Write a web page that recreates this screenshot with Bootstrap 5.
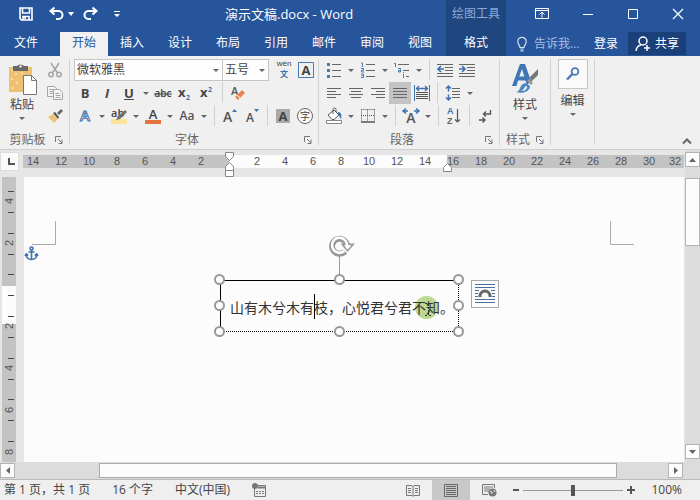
<!DOCTYPE html>
<html lang="zh-CN">
<head>
<meta charset="utf-8">
<meta name="viewport" content="width=device-width, initial-scale=1">
<title>演示文稿.docx - Word</title>
<link href="https://cdn.jsdelivr.net/npm/bootstrap@5.3.0/dist/css/bootstrap.min.css" rel="stylesheet">
<style>
:root{--blue:#27559b;--deep:#204680;--ink:#444;--accent:#4a7ab0}
body{font:12px/16px "Open Sans","Noto Sans CJK SC",sans-serif;color:var(--ink);background:#e6e6e6}
button{border:0;background:none;padding:0;color:inherit;font:inherit}
svg{display:block;flex:none;overflow:visible}
a{color:inherit;text-decoration:none}
.i16{width:16px;height:16px}
/* title bar and tabs */
.topbar{background:var(--blue);color:#fff;height:56px}
.title-row{height:32px;padding-bottom:4px}
.doc-title{font-size:13px}
.quick{width:225px;padding-left:18px}
.tab-row{height:24px}
.tab-row a{width:48px;height:24px;line-height:22px;text-align:center}
.tab-row a.file-tab{width:52px;margin-right:8px}
.tab-row a.current{background:#f1f1f1;color:var(--blue)}
.context-tab{width:60px;background:var(--deep)}
.context-name{color:#8ba8d6}
.window-side{width:194px}
.tell{width:60px;background:none;border:0;color:#b4c6e4;padding:0;font:inherit}
.tell::placeholder{color:#a9bee0;opacity:1}
.sign-in{margin-right:10px}
.share{background:#1b3f78;width:58px;height:23px}
/* ribbon */
.ribbon{background:#f0f0f0;height:94px;border-bottom:1px solid #cfcfcf}
.group{background:linear-gradient(#d2d2d2,#d2d2d2) right top/1px 86px no-repeat;padding-right:1px;margin-top:3px}
.g-clip{width:70px}.g-font{width:249px}.g-para{width:181px}.g-style{width:51px}.g-edit{width:44px}
.tools{height:23px}
.tool{width:22px;height:22px;display:flex;align-items:center;justify-content:center}
.tool.on{background:#c3c3c3}
.arrow{width:12px;height:22px;display:flex;align-items:center;justify-content:center}
.arrow::after,.drop::after{content:"";border:3px solid transparent;border-top-color:#666;border-bottom:0}
.rule{width:9px;height:21px;background:linear-gradient(#d0d0d0,#d0d0d0) center/1px 100% no-repeat}
.group-label{height:18px;color:#666}
.launch{width:14px}
.pick{appearance:none;border:1px solid #c6c6c6;background:#fdfdfd url("data:image/svg+xml,%3Csvg xmlns='http://www.w3.org/2000/svg' width='6' height='3'%3E%3Cpath d='M0 0h6L3 3z' fill='%23666'/%3E%3C/svg%3E") right 3px center no-repeat;height:22px;padding:0 2px;color:#444;font:inherit;border-radius:0}
.pick-name{width:149px}.pick-size{width:47px;margin-left:-1px}
.glyph{font-size:13px;font-weight:700;line-height:20px;color:#444}
.tiny-latin{font:8px "Liberation Sans",sans-serif}
.tiny-han{font:700 8px "Noto Sans CJK SC",sans-serif}
.sort-letter{font:700 9px "Liberation Sans",sans-serif}
.find-box{width:30px;height:30px;border:1px solid #c6c6c6;background:#fafafa}
/* rulers */
.ruler-row{height:27px}
.corner{width:19px;height:19px;background:#fafafa;border:1px solid #ddd;margin-top:2px}
.h-ruler{height:13px;margin:5px 1px 0 4px;font:11px/13px "Liberation Sans",sans-serif;color:#555;background:linear-gradient(90deg,#c3c3c3 206px,#fcfcfc 206px 424px,#c3c3c3 424px)}
.h-ruler span{width:28px;flex:none;text-align:center}
.h-ruler span:first-child{width:24px;padding-right:4px}
.h-ruler span:last-child{width:24px}
.ruler-pin{position:absolute}
.pin-left{left:225px;top:2px}
.pin-right{left:443px;top:13px}
.v-ruler{width:14px;margin:0 8px 0 2px;padding-top:14px;font:11px/14px "Liberation Sans",sans-serif;color:#555;background:linear-gradient(#c3c3c3 109px,#fcfcfc 109px 147px,#c3c3c3 147px)}
.v-ruler div{flex:1 1 0;display:flex;align-items:center;justify-content:center;background:linear-gradient(#444,#444) 6px 0/6px 1px no-repeat}
.v-ruler span{transform:rotate(-90deg)}
.paper{background:#fcfcfc;margin-right:1px}
/* objects floating on the page canvas */
.float-item{position:absolute}
.crop-left{left:8px;top:44px}
.crop-right{left:586px;top:44px}
.anchor{left:1px;top:69px}
.handles{left:190px;top:56px}
.text-frame{left:196px;top:103px;width:239px;height:52px;border:1px dotted #000;border-top-style:solid;border-left-style:solid;padding:16px 0 0 9px}
.verse{font:14px/20px "Noto Sans CJK SC",sans-serif;color:#333;white-space:nowrap}
.spot{left:391px;top:119px;width:23px;height:23px;border-radius:50%;background:#bcd992}
.wrap-btn{left:447px;top:103px;width:28px;height:28px;border:1px solid #a8a8a8;background:#fcfcfc}
/* scrollbars */
.v-bar{width:15px;padding:2px 0 3px;background:#dcdcdc}
.bar-end{background:#fcfcfc;border:1px solid #b4b4b4;width:15px;height:15px;display:flex;align-items:center;justify-content:center}
.v-thumb{height:68px;margin-top:11px;background:#fcfcfc;border:1px solid #b4b4b4}
.h-bar{height:17px;padding:1px 17px 1px 0;background:#dcdcdc}
.h-thumb{margin:0 51px 0 84px;height:15px;background:#fcfcfc;border:1px solid #aaa}
/* status bar */
.status{height:21px;background:#efefef;border-top:1px solid #b9b9b9;padding-left:4px;white-space:nowrap}
.facts{gap:22px}
.view{width:38px;height:20px;display:flex;align-items:center;justify-content:center}
.view.on{background:#c8c8c8}
.zoom{appearance:none;width:100px;height:12px;background:linear-gradient(#999,#999) center/100% 1px no-repeat}
.zoom::-webkit-slider-thumb{appearance:none;width:4px;height:11px;background:#555}
.sign{width:15px;height:20px;display:flex;align-items:center;justify-content:center}
.percent{margin:0 18px 0 13px}
</style>
<script src="https://cdn.jsdelivr.net/npm/bootstrap@5.3.0/dist/js/bootstrap.bundle.min.js"></script>
</head>
<body class="d-flex flex-column vh-100 overflow-hidden">

<header class="topbar d-flex flex-shrink-0">
  <div class="flex-grow-1">
    <div class="title-row d-flex align-items-center">
      <div class="quick d-flex align-items-center">
        <button aria-label="保存"><svg class="i16" viewBox="0 0 16 16" fill="none" stroke="#fff" stroke-width="1.6"><path d="M2 2h12v12H3.500L2 12.500z"/><path d="M4.500 2v5h7V2M5 14v-3.500h6V14M7 11v2"/></svg></button>
        <button class="ms-3" aria-label="撤消"><svg width="14" height="16" viewBox="1 0 14 16" fill="none" stroke="#fff" stroke-width="2"><path d="M5.500 1.500 1.500 5l4 3.500M2 5h7.500a4 4 0 0 1 0 8H7"/></svg></button>
        <span class="ms-1"><svg width="6" height="4"><path d="M0 0h6L3 4z" fill="#fff"/></svg></span>
        <button class="ms-2" aria-label="恢复"><svg width="16" height="16" viewBox="0 0 16 16" fill="none" stroke="#fff" stroke-width="2"><path d="M10.500 1.500 14.500 5l-4 3.500M14 5H6.500a4 4 0 0 0 0 8H9"/></svg></button>
        <button class="ms-3" aria-label="自定义快速访问工具栏"><svg width="7" height="7"><path d="M0 0h6v1H0zM0 3h6L3 6z" fill="#fff"/></svg></button>
      </div>
      <span class="doc-title">演示文稿.docx - Word</span>
    </div>
    <nav class="tab-row d-flex">
      <a class="file-tab" href="#">文件</a><a class="current" href="#">开始</a><a href="#">插入</a><a href="#">设计</a><a href="#">布局</a><a href="#">引用</a><a href="#">邮件</a><a href="#">审阅</a><a href="#">视图</a>
    </nav>
  </div>
  <div class="context-tab d-flex flex-column align-items-center">
    <div class="title-row d-flex align-items-center context-name">绘图工具</div>
    <nav class="tab-row"><a class="d-block" href="#">格式</a></nav>
  </div>
  <div class="window-side">
    <div class="title-row d-flex align-items-center justify-content-around ps-2 ms-1">
      <button aria-label="功能区显示选项"><svg width="14" height="12" fill="none" stroke="#fff"><path d="M.5.5h13v10H.5zM.5 2.500h13M7 9.500v-5M4.500 6.500 7 4l2.500 2.500"/></svg></button>
      <button aria-label="最小化"><svg width="12" height="12"><path d="M1 6h10v1H1z" fill="#fff"/></svg></button>
      <button aria-label="最大化"><svg width="12" height="12"><path d="M1.500 1.500h9v9h-9z" fill="none" stroke="#fff"/></svg></button>
      <button aria-label="关闭"><svg width="12" height="12"><path d="m1 1 10 10M11 1 1 11" fill="none" stroke="#fff" stroke-width="1.200"/></svg></button>
    </div>
    <div class="tab-row d-flex align-items-start">
      <svg class="ms-2 me-1 mt-1" width="16" height="16" viewBox="0 0 16 16" fill="none" stroke="#d5e0f2" stroke-width="1.200"><path d="M6 11.500C6 9.500 3.800 8.500 3.800 5.500a4.200 4.200 0 0 1 8.400 0c0 3-2.200 4-2.200 6zM6.200 13h3.600M6.500 14.800h3"/></svg>
      <input class="tell lh-lg" aria-label="告诉我" placeholder="告诉我...">
      <button class="lh-lg sign-in">登录</button>
      <button class="share d-flex align-items-center justify-content-center">
        <svg class="me-1" width="16" height="16" viewBox="0 0 16 16" fill="none" stroke="#fff" stroke-width="1.500"><circle cx="8" cy="5" r="4"/><path d="M1 15c.5-4 2.500-5.500 5-6M12 9v6M9 12h6"/></svg>共享</button>
    </div>
  </div>
</header>

<section class="ribbon d-flex flex-shrink-0" aria-label="开始">
  <div class="group g-clip d-flex flex-column justify-content-between">
    <div class="d-flex">
      <button class="drop d-flex flex-column align-items-center ms-1 pt-1">
        <svg width="36" height="34" viewBox="1 0 36 34"><path d="M6 4h23v25H6z" fill="#edc171"/><path d="M8 6h2v2H8zm4 4h2v2h-2zm-4 5h2v2H8zm5 4h2v2h-2zm-4 5h2v2H9zm9-15h2v2h-2z" fill="#f7dda6"/><path d="M10 3h4a4 3 0 0 1 7 0h4v5H10z" fill="#686868"/><circle cx="17.500" cy="3.500" r="1.200" fill="#f0f0f0"/><path d="M20.500 12.500h8l5 5v14h-13z" fill="#fff" stroke="#777"/><path d="M28.500 12.500v5h5" fill="none" stroke="#777"/></svg>
        <span class="mb-1">粘贴</span>
      </button>
      <div class="ms-1">
        <div class="tools"><button class="tool" aria-label="剪切"><svg width="16" height="16" viewBox="0 0 16 16" fill="none" stroke="#a5a5a5" stroke-width="1.500"><path d="m4 1 6.500 10M12 1 5.500 11"/><circle cx="4" cy="12.500" r="2.200"/><circle cx="12" cy="12.500" r="2.200"/></svg></button></div>
        <div class="tools"><button class="tool" aria-label="复制"><svg width="16" height="16" viewBox="0 0 16 16" fill="#f4f4f4" stroke="#a5a5a5"><path d="M.5 1.500h7l2 2v8h-9zM2.500 4.500h4M2.500 6.500h4M2.500 8.500h4"/><path d="M6.500 4.500h6l3 3v7h-9zM8.500 8.500h4M8.500 10.500h5M8.500 12.500h5"/></svg></button></div>
        <div class="tools"><button class="tool" aria-label="格式刷"><svg width="16" height="16" viewBox="0 0 16 16"><path d="m1 9 5-3 5 5-4 4z" fill="#efc377"/><path d="m6 5 2-1 4 5-1 2z" fill="#555"/><path d="m10 5 4-4 2 2-4 4z" fill="#666"/></svg></button></div>
      </div>
    </div>
    <div class="group-label d-flex align-items-center"><span class="flex-grow-1 text-center">剪贴板</span><button class="launch" aria-label="剪贴板选项"><svg width="8" height="8" fill="none" stroke="#777"><path d="M.5 6V.5H6M3 3l4 4M7 3.500v4H3.500"/></svg></button></div>
  </div>

  <div class="group g-font d-flex flex-column justify-content-between">
    <div class="ps-1">
      <div class="tools d-flex">
        <select class="pick pick-name" aria-label="字体"><option>微软雅黑</option></select><select class="pick pick-size" aria-label="字号"><option>五号</option></select>
        <button class="tool ms-1" aria-label="拼音指南"><svg width="18" height="20"><text class="tiny-latin" x="9" y="6" text-anchor="middle" fill="#444">wén</text><text class="tiny-han" x="9" y="17" text-anchor="middle" fill="#3e71ad">文</text></svg></button>
        <button class="tool" aria-label="字符边框"><svg width="16" height="16"><path d="M.5.5h15v15H.5z" fill="none" stroke="#4a7ab0"/><text x="8" y="13" text-anchor="middle" font-size="13" font-weight="700" fill="#444">A</text></svg></button>
      </div>
      <div class="tools d-flex">
        <button class="tool glyph">B</button><button class="tool glyph fst-italic">I</button><button class="tool glyph text-decoration-underline">U</button><button class="arrow" aria-label="下划线类型"></button>
        <button class="tool" aria-label="删除线"><svg width="18" height="14"><text x="9" y="11" text-anchor="middle" font-size="10" font-weight="600" fill="#444">abc</text><path d="M0 8h18" stroke="#444"/></svg></button>
        <button class="tool" aria-label="下标"><svg width="16" height="16"><text x="1" y="12" font-size="13" font-weight="700" fill="#444">x</text><text x="9" y="15" font-size="7" font-weight="700" fill="#3e71ad">2</text></svg></button>
        <button class="tool" aria-label="上标"><svg width="16" height="16"><text x="1" y="12" font-size="13" font-weight="700" fill="#444">x</text><text x="9" y="7" font-size="7" font-weight="700" fill="#3e71ad">2</text></svg></button>
        <span class="rule"></span>
        <button class="tool" aria-label="清除所有格式"><svg width="16" height="16"><text x="1" y="10" font-size="11" font-weight="600" fill="#555">A</text><path d="m5 12 7-7 3 3-7 7z" fill="#e98550"/><path d="m7 10 3 3" stroke="#fff"/></svg></button>
      </div>
      <div class="tools d-flex">
        <button class="tool" aria-label="文本效果"><svg width="18" height="18"><text x="9" y="14" text-anchor="middle" font-size="15" font-weight="600" fill="#fff" stroke="#3e71ad">A</text></svg></button><button class="arrow" aria-label="更多文本效果"></button>
        <button class="tool" aria-label="突出显示"><svg width="18" height="18"><path d="M1 12h16v5H1z" fill="#fbe39b"/><text x="1" y="10" font-size="11" font-weight="600" fill="#444">ab</text><path d="m6 13 2-4 7-6 2 2-7 7z" fill="#707070"/></svg></button><button class="arrow" aria-label="突出显示颜色"></button>
        <button class="tool" aria-label="字体颜色"><svg width="18" height="18"><text x="9" y="12" text-anchor="middle" font-size="13" font-weight="600" fill="#444">A</text><path d="M1 13h16v4H1z" fill="#e0743a"/></svg></button><button class="arrow" aria-label="更多字体颜色"></button>
        <button class="tool" aria-label="更改大小写"><svg width="18" height="16"><text x="9" y="12" text-anchor="middle" font-size="12" font-weight="600" fill="#555">Aa</text></svg></button><button class="arrow" aria-label="大小写选项"></button>
        <span class="rule"></span>
        <button class="tool" aria-label="增大字号"><svg width="16" height="16"><text x="1" y="14" font-size="14" font-weight="600" fill="#555">A</text><path d="M10 4h5l-2.500-3z" fill="#3e71ad"/></svg></button>
        <button class="tool" aria-label="减小字号"><svg width="16" height="16"><text x="2" y="14" font-size="12" font-weight="600" fill="#555">A</text><path d="M10 1h5l-2.500 3z" fill="#3e71ad"/></svg></button>
        <span class="rule"></span>
        <button class="tool" aria-label="字符底纹"><svg width="14" height="14"><path d="M0 0h14v14H0z" fill="#aaa"/><text x="7" y="12" text-anchor="middle" font-size="13" font-weight="700" fill="#444">A</text></svg></button>
        <button class="tool" aria-label="带圈字符"><svg width="16" height="16"><circle cx="8" cy="8" r="7.500" fill="#fafafa" stroke="#666"/><text x="8" y="12" text-anchor="middle" font-size="10" fill="#444">字</text></svg></button>
      </div>
    </div>
    <div class="group-label d-flex align-items-center"><span class="flex-grow-1 text-center">字体</span><button class="launch" aria-label="字体选项"><svg width="8" height="8" fill="none" stroke="#777"><path d="M.5 6V.5H6M3 3l4 4M7 3.500v4H3.500"/></svg></button></div>
  </div>

  <div class="group g-para d-flex flex-column justify-content-between">
    <div class="ps-1">
      <div class="tools d-flex">
        <button class="tool" aria-label="项目符号"><svg class="i16"><path d="M1 1h3v3H1zM1 7h3v3H1zM1 13h3v3H1z" fill="#4a7ab0"/><path d="M6 2.500h9M6 8.500h9M6 14.500h9" stroke="#666"/></svg></button><button class="arrow" aria-label="项目符号库"></button>
        <button class="tool" aria-label="编号"><svg class="i16" fill="none"><path d="M1 1h1.500v4M1 6.500h2.500v1.800H1.500V10H4M1 12h2.500v3.500H1M1.500 13.700h2" stroke="#4a7ab0"/><path d="M6 2.500h9M6 8.500h9M6 14.500h9" stroke="#666"/></svg></button><button class="arrow" aria-label="编号库"></button>
        <button class="tool" aria-label="多级列表"><svg class="i16" fill="none"><path d="M0 1.500h1.500V5M4 6.500h2.500V10H4.500V8.500h2M9.500 10v1M9.500 12v4" stroke="#4a7ab0"/><path d="M4 2.500h11M9 8.500h6M12 14.500h3" stroke="#666"/></svg></button><button class="arrow" aria-label="列表库"></button>
        <span class="rule"></span>
        <button class="tool" aria-label="减少缩进量"><svg class="i16" fill="none"><path d="M0 2.500h16M8 5.500h8M8 8.500h8M0 11.500h16M0 14.500h16" stroke="#666"/><path d="M7 7H1M4 4 1 7l3 3" stroke="#3e71ad" stroke-width="1.700"/></svg></button>
        <button class="tool" aria-label="增加缩进量"><svg class="i16" fill="none"><path d="M0 2.500h16M8 5.500h8M8 8.500h8M0 11.500h16M0 14.500h16" stroke="#666"/><path d="M0 7h6M3 4l3 3-3 3" stroke="#3e71ad" stroke-width="1.700"/></svg></button>
      </div>
      <div class="tools d-flex">
        <button class="tool" aria-label="左对齐"><svg width="14" height="12" stroke="#666"><path d="M0 1.500h14M0 4.500h9M0 7.500h14M0 10.500h9"/></svg></button>
        <button class="tool" aria-label="居中"><svg width="14" height="12" stroke="#666"><path d="M0 1.500h14M2 4.500h10M0 7.500h14M2 10.500h10"/></svg></button>
        <button class="tool" aria-label="右对齐"><svg width="14" height="12" stroke="#666"><path d="M0 1.500h14M5 4.500h9M0 7.500h14M5 10.500h9"/></svg></button>
        <button class="tool on" aria-label="两端对齐" aria-pressed="true"><svg width="14" height="12" stroke="#666"><path d="M0 1.500h14M0 4.500h14M0 7.500h14M0 10.500h14"/></svg></button>
        <button class="tool" aria-label="分散对齐"><svg class="i16" fill="none"><path d="M.5 0v16M15.500 0v16" stroke="#3e71ad"/><path d="M3 3.500h10M5 1 2.500 3.500 5 6M11 1l2.500 2.500L11 6" stroke="#3e71ad" stroke-width="1.400"/><path d="M2 7.500h12M2 9.500h12M2 11.500h12M2 13.500h12" stroke="#555"/></svg></button>
        <span class="rule"></span>
        <button class="tool" aria-label="行和段落间距"><svg class="i16" fill="none"><path d="M3.500 1v5.500M1 3.500 3.500 1 6 3.500M3.500 15V9.500M1 12.500 3.500 15 6 12.500" stroke="#3e71ad" stroke-width="1.500"/><path d="M7 3.500h8M7 6.500h8M7 9.500h8M7 12.500h8" stroke="#666"/></svg></button><button class="arrow" aria-label="间距选项"></button>
      </div>
      <div class="tools d-flex">
        <button class="tool" aria-label="底纹"><svg class="i16" fill="none"><path d="M.5 12.500h15v3H.5z" fill="#fff" stroke="#888"/><path d="m2 7 6-5 5 5-5 4.500H6zM7 6V1.500a1.500 1.500 0 0 1 3 0V4" fill="#fff" stroke="#555"/><path d="M12 4c3 0 4 3 3 7-1.500-1-1-4-3-4z" fill="#3e71ad"/></svg></button><button class="arrow" aria-label="底纹颜色"></button>
        <button class="tool" aria-label="边框"><svg width="14" height="14" fill="none" stroke="#555"><path d="M.5.500h13M.5.500v12M13.500.500v12M6.500 .5v12M0 6.500h14" stroke-dasharray="1 1"/><path d="M0 13h14" stroke-width="1.500"/></svg></button><button class="arrow" aria-label="边框类型"></button>
        <span class="rule"></span>
        <button class="tool" aria-label="中文版式"><svg width="18" height="16" fill="none"><text x="9" y="15" text-anchor="middle" font-size="14" font-weight="600" fill="#555">A</text><path d="M1 3h5M4 .5 1 3l3 2.500M12 3h5M14 .5 17 3l-3 2.500" stroke="#3e71ad" stroke-width="1.500"/></svg></button><button class="arrow" aria-label="版式选项"></button>
        <span class="rule"></span>
        <button class="tool" aria-label="排序"><svg width="16" height="18"><text class="sort-letter" x="1" y="7" fill="#3e71ad">A</text><text class="sort-letter" x="1" y="17" fill="#666">Z</text><path d="M11.500 2v13M9 12.500l2.500 2.500 2.500-2.500" fill="none" stroke="#555" stroke-width="1.200"/></svg></button>
        <span class="rule"></span>
        <button class="tool" aria-label="显示编辑标记"><svg class="i16" fill="none" stroke="#555" stroke-width="1.400"><path d="M13.500 2v4H7M9 3.500 6.500 6 9 8.500M2 12h6M5.500 9.500 8 12l-2.500 2.500"/></svg></button>
      </div>
    </div>
    <div class="group-label d-flex align-items-center"><span class="flex-grow-1 text-center">段落</span><button class="launch" aria-label="段落选项"><svg width="8" height="8" fill="none" stroke="#777"><path d="M.5 6V.5H6M3 3l4 4M7 3.500v4H3.500"/></svg></button></div>
  </div>

  <div class="group g-style d-flex flex-column justify-content-between">
    <button class="drop d-flex flex-column align-items-center pt-1">
      <svg width="30" height="34" viewBox="0 0 30 34"><path fill-rule="evenodd" d="M2 23 10 1h5l6 17-4 4-1.500-4.500H8L6.500 23zM9.300 13.500h5L12 6z" fill="#3f76b5"/><path d="m20 14 8-8v6l-7 7z" fill="#777"/><path d="m17 18 2-2 4 4-2 2z" fill="#999"/><path d="M6 29c5 0 3-9 10-9l4 3c0 6-8 8-14 6z" fill="#4f86c4"/><path d="M11 28c4-1 3-5 6-5 0 4-3 5-6 5z" fill="#fff"/></svg>
      <span class="mb-1">样式</span>
    </button>
    <div class="group-label d-flex align-items-center"><span class="flex-grow-1 text-center">样式</span><button class="launch" aria-label="样式选项"><svg width="8" height="8" fill="none" stroke="#777"><path d="M.5 6V.5H6M3 3l4 4M7 3.500v4H3.500"/></svg></button></div>
  </div>

  <div class="group g-edit">
    <button class="drop d-flex flex-column align-items-center w-100">
      <span class="find-box d-flex align-items-center justify-content-center mb-1"><svg width="14" height="14" viewBox="0 0 14 14" fill="none" stroke="#4a7ab0" stroke-width="1.800"><circle cx="9" cy="4.500" r="3.400"/><path d="M6.500 7 1 12.500" stroke-width="2.400"/></svg></span>
      <span class="mb-1">编辑</span>
    </button>
  </div>
  <div class="flex-grow-1 d-flex align-items-end justify-content-end pe-2 pb-1"><button aria-label="折叠功能区"><svg width="10" height="8"><path d="m1 6.500 4-4 4 4" fill="none" stroke="#666" stroke-width="2"/></svg></button></div>
</section>

<main class="d-flex flex-grow-1 overflow-hidden">
  <div class="flex-grow-1 d-flex flex-column overflow-hidden">
    <div class="ruler-row d-flex flex-shrink-0 position-relative">
      <button class="corner" aria-label="制表符类型"><svg width="17" height="17"><path d="M8 5v6h6" fill="none" stroke="#555" stroke-width="2"/></svg></button>
      <div class="h-ruler d-flex flex-grow-1 overflow-hidden">
        <span>14</span><span>12</span><span>10</span><span>8</span><span>6</span><span>4</span><span>2</span><span></span><span>2</span><span>4</span><span>6</span><span>8</span><span>10</span><span>12</span><span>14</span><span>16</span><span>18</span><span>20</span><span>22</span><span>24</span><span>26</span><span>28</span><span>30</span><span>32</span>
      </div>
      <svg class="ruler-pin pin-left" width="9" height="25" fill="#fff" stroke="#888"><path d="M.5.500h8v4l-4 4-4-4zM.5 18.500v-4l4-4 4 4v4zM.5 18.500h8v6h-8z"/></svg>
      <svg class="ruler-pin pin-right" width="9" height="10" fill="#fff" stroke="#888"><path d="M.5 8.500v-4l4-4 4 4v4z"/></svg>
    </div>
    <div class="d-flex flex-grow-1 overflow-hidden">
      <div class="v-ruler d-flex flex-column">
        <div><span>4</span></div><div></div><div><span>2</span></div><div></div><div></div><div></div><div><span>2</span></div><div></div><div><span>4</span></div><div></div><div><span>6</span></div><div></div><div><span>8</span></div>
      </div>
      <div class="paper flex-grow-1 position-relative overflow-hidden">
        <svg class="float-item crop-left" width="24" height="24"><path d="M0 23.500h23.500V0" fill="none" stroke="#aaa"/></svg>
        <svg class="float-item crop-right" width="24" height="24"><path d="M.5 0v23.500H24" fill="none" stroke="#aaa"/></svg>
        <svg class="float-item anchor" width="13" height="15" fill="none" stroke="#3e71ad" stroke-width="1.600"><circle cx="6.500" cy="2.500" r="1.500"/><path d="M6.500 4v9M3.500 6h6M1 8.500C1.500 12 4 13.500 6.500 13.500S11.500 12 12 8.500M0 10l1.200-2 2 1.500M13 10l-1.200-2-2 1.500"/></svg>
        <div class="float-item spot"></div>
        <div class="float-item text-frame"><p class="verse m-0">山有木兮木有枝，心悦君兮君不知。</p></div>
        <svg class="float-item handles" width="252" height="106" fill="#fff" stroke="#999" stroke-width="2">
          <path d="M125.500 22v20" stroke-width="1"/>
          <path d="M100.500 61v25" stroke="#000" stroke-width="1"/>
          <circle cx="5.500" cy="46.500" r="4.500"/><circle cx="125.500" cy="46.500" r="4.500"/><circle cx="244.500" cy="46.500" r="4.500"/>
          <circle cx="5.500" cy="72.500" r="4.500"/><circle cx="244.500" cy="72.500" r="4.500"/>
          <circle cx="5.500" cy="98.500" r="4.500"/><circle cx="125.500" cy="98.500" r="4.500"/><circle cx="244.500" cy="98.500" r="4.500"/>
          <path d="M131 18.500A7.500 7.500 0 1 1 133 12.500" fill="none" stroke-width="6"/>
          <path d="M126.500 10.500H141L133.500 19z" fill="#999" stroke="none"/>
          <path d="M130.300 18A7.500 7.500 0 1 1 133 13" fill="none" stroke="#fff" stroke-width="2.400"/>
          <path d="M130 12.200h7.500l-4 4.500z" fill="#fff" stroke="none"/>
          <path d="M211 70.500h2m2 0h3M214.500 71v12M211 82.500h2m2 0h3" stroke="#333" stroke-width="1" stroke-dasharray="2 1"/>
        </svg>
        <button class="float-item wrap-btn d-flex align-items-center justify-content-center" aria-label="布局选项"><svg width="20" height="20" fill="none" stroke="#4a6f9c"><path d="M0 .5h20M0 3.500h20M0 6.500h4M16 6.500h4M0 9.500h3M17 9.500h3M0 12.500h3M17 12.500h3M0 15.500h20M0 18.500h20"/><path d="M5 13v-1a5 5 0 0 1 10 0v1" stroke="#666" stroke-width="3"/></svg></button>
      </div>
    </div>
  </div>
  <div class="v-bar d-flex flex-column flex-shrink-0">
    <button class="bar-end" aria-label="向上滚动"><svg width="7" height="4"><path d="M0 4h7L3.500 0z" fill="#666"/></svg></button>
    <div class="v-thumb"></div>
    <button class="bar-end mt-auto" aria-label="向下滚动"><svg width="7" height="4"><path d="M0 0h7L3.500 4z" fill="#666"/></svg></button>
  </div>
</main>
<div class="h-bar d-flex flex-shrink-0">
  <button class="bar-end" aria-label="向左滚动"><svg width="4" height="7"><path d="M4 0v7L0 3.500z" fill="#666"/></svg></button>
  <div class="h-thumb flex-grow-1"></div>
  <button class="bar-end" aria-label="向右滚动"><svg width="4" height="7"><path d="M0 0v7l4-3.500z" fill="#666"/></svg></button>
</div>

<footer class="status d-flex align-items-center flex-shrink-0">
  <div class="facts d-flex align-items-center">
    <span>第 1 页，共 1 页</span><span>16 个字</span><span>中文(中国)</span>
    <button aria-label="宏录制"><svg width="14" height="14" fill="none" stroke="#777"><path d="M2.500 4v9.500h11v-11H6"/><path d="M6 4.500h8" stroke-width="2"/><path d="M4 8.500h8M4 10.500h8" stroke-dasharray="2 1"/><circle cx="3" cy="3" r="3" fill="#777" stroke="none"/></svg></button>
  </div>
  <div class="ms-auto d-flex align-items-center">
    <button class="view" aria-label="阅读视图"><svg width="14" height="13" fill="none" stroke="#777"><path d="M.5 1.500H6l1 1 1-1h5.500v10H8l-1 1-1-1H.5zM7 2v10M2 4.500h3M2 6.500h3M2 8.500h3M9 4.500h3M9 6.500h3M9 8.500h3"/></svg></button>
    <button class="view on" aria-label="页面视图" aria-pressed="true"><svg width="14" height="13" fill="none" stroke="#666"><path d="M.5.500h13v12H.5zM2 2.500h10M2 4.500h10M2 6.500h10M2 8.500h10M2 10.500h10"/></svg></button>
    <button class="view" aria-label="Web 版式视图"><svg width="15" height="13" fill="none" stroke="#777"><path d="M12.500 4V.5H.5v10H6M2 3h9M2 5h6M2 7h5"/><circle cx="10.500" cy="8.500" r="4" fill="#777" stroke="none"/><path d="M8 7l2 1v2M12 6l1 2" stroke="#eee"/></svg></button>
    <button class="sign" aria-label="缩小"><svg width="8" height="8"><path d="M1 3h6v2H1z" fill="#555"/></svg></button>
    <input class="zoom" type="range" min="0" max="100" value="50" aria-label="显示比例">
    <button class="sign" aria-label="放大"><svg width="8" height="8"><path d="M0 3h3V0h2v3h3v2H5v3H3V5H0z" fill="#555"/></svg></button>
    <span class="percent">100%</span>
  </div>
</footer>
</body>
</html>
